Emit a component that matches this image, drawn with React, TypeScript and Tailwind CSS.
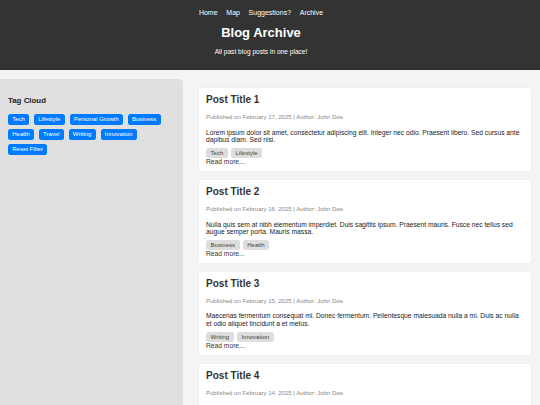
import React from 'react';

const navLinks = ['Home', 'Map', 'Suggestions?', 'Archive'];

const tagCloud = ['Tech', 'Lifestyle', 'Personal Growth', 'Business', 'Health', 'Travel', 'Writing', 'Innovation'];

// Posts shown in the archive, newest first
const posts = [
    {
        title: 'Post Title 1',
        date: 'February 17, 2025',
        body: 'Lorem ipsum dolor sit amet, consectetur adipiscing elit. Integer nec odio. Praesent libero. Sed cursus ante dapibus diam. Sed nisi.',
        tags: ['Tech', 'Lifestyle'],
    },
    {
        title: 'Post Title 2',
        date: 'February 16, 2025',
        body: 'Nulla quis sem at nibh elementum imperdiet. Duis sagittis ipsum. Praesent mauris. Fusce nec tellus sed augue semper porta. Mauris massa.',
        tags: ['Business', 'Health'],
    },
    {
        title: 'Post Title 3',
        date: 'February 15, 2025',
        body: 'Maecenas fermentum consequat mi. Donec fermentum. Pellentesque malesuada nulla a mi. Duis ac nulla et odio aliquet tincidunt a et metus.',
        tags: ['Writing', 'Innovation'],
    },
    {
        title: 'Post Title 4',
        date: 'February 14, 2025',
        body: 'Vestibulum lacinia arcu eget nulla. Class aptent taciti sociosqu ad litora torquent per conubia nostra, per inceptos himenaeos.',
        tags: ['Personal Growth', 'Travel'],
    },
];

const PostCard = ({ post }: { post: (typeof posts)[number] }) => (
    <article className="rounded-[3px] bg-white px-[7px] pt-[6px] pb-[6px] shadow-[0_0_3px_rgba(0,0,0,0.05)]">
        <h2 className="text-[10.05px] leading-[12px] font-bold text-[#333]">{post.title}</h2>
        <p className="mt-[8px] text-[6.03px] leading-[7.2px] text-[#888]">
            Published on {post.date} | Author: John Doe
        </p>
        <p className="mt-[7.1px] text-[6.7px] leading-[7.5px] text-[#222]">{post.body}</p>
        <div className="mt-[6.6px] text-[6.03px] leading-[7.5px]">
            {post.tags.map((tag) => (
                <span key={tag} className="mr-[3px] rounded-[2.5px] bg-[#ddd] px-[4.6px] py-[2px] text-[#444]">
                    {tag}
                </span>
            ))}
        </div>
        <a href="#" className="block text-[6.7px] leading-[7.5px] text-[#333]">
            Read more...
        </a>
    </article>
);

export default function App() {
    return (
        <div
            className="flex h-screen flex-col overflow-hidden bg-[#f4f4f4]"
            style={{ fontFamily: '"Liberation Sans", Arial, sans-serif' }}
        >
            <header className="bg-[#333] pt-[8.6px] pr-[18px] pb-[14.3px] text-center text-white">
                <nav className="flex justify-center gap-[8.7px] text-[7px] leading-[8.4px]">
                    {navLinks.map((link) => (
                        <a key={link} href="#" className="text-white">
                            {link}
                        </a>
                    ))}
                </nav>
                <h1 className="mt-[8px] text-[13px] leading-[15.6px] font-bold">Blog Archive</h1>
                <p className="mt-[7.7px] text-[6.6px] leading-[7.8px]">All past blog posts in one place!</p>
            </header>

            <div className="flex flex-1 gap-[16px] pt-[9px] pr-[9px]">
                <aside className="w-[183px] shrink-0 rounded-tr-[4px] bg-[#e0e0e0] px-[8px] pt-[8px]">
                    <h3 className="mt-[9px] text-[7.9px] leading-[9.5px] font-bold text-[#222]">Tag Cloud</h3>
                    <div className="mt-[8.2px] flex flex-wrap gap-x-[5px] gap-y-[4.3px]">
                        {tagCloud.map((tag) => (
                            <button
                                key={tag}
                                className="rounded-[2.5px] bg-[#007bff] px-[4.2px] py-[2px] text-[6.03px] leading-[6.9px] text-white"
                            >
                                {tag}
                            </button>
                        ))}
                        <button className="rounded-[2.5px] bg-[#007bff] px-[4.2px] py-[2px] text-[6.03px] leading-[6.9px] text-white">
                            Reset Filter
                        </button>
                    </div>
                </aside>

                <main className="flex flex-1 flex-col gap-[9px] pt-[9px]">
                    {posts.map((post) => (
                        <PostCard key={post.title} post={post} />
                    ))}
                </main>
            </div>
        </div>
    );
}
